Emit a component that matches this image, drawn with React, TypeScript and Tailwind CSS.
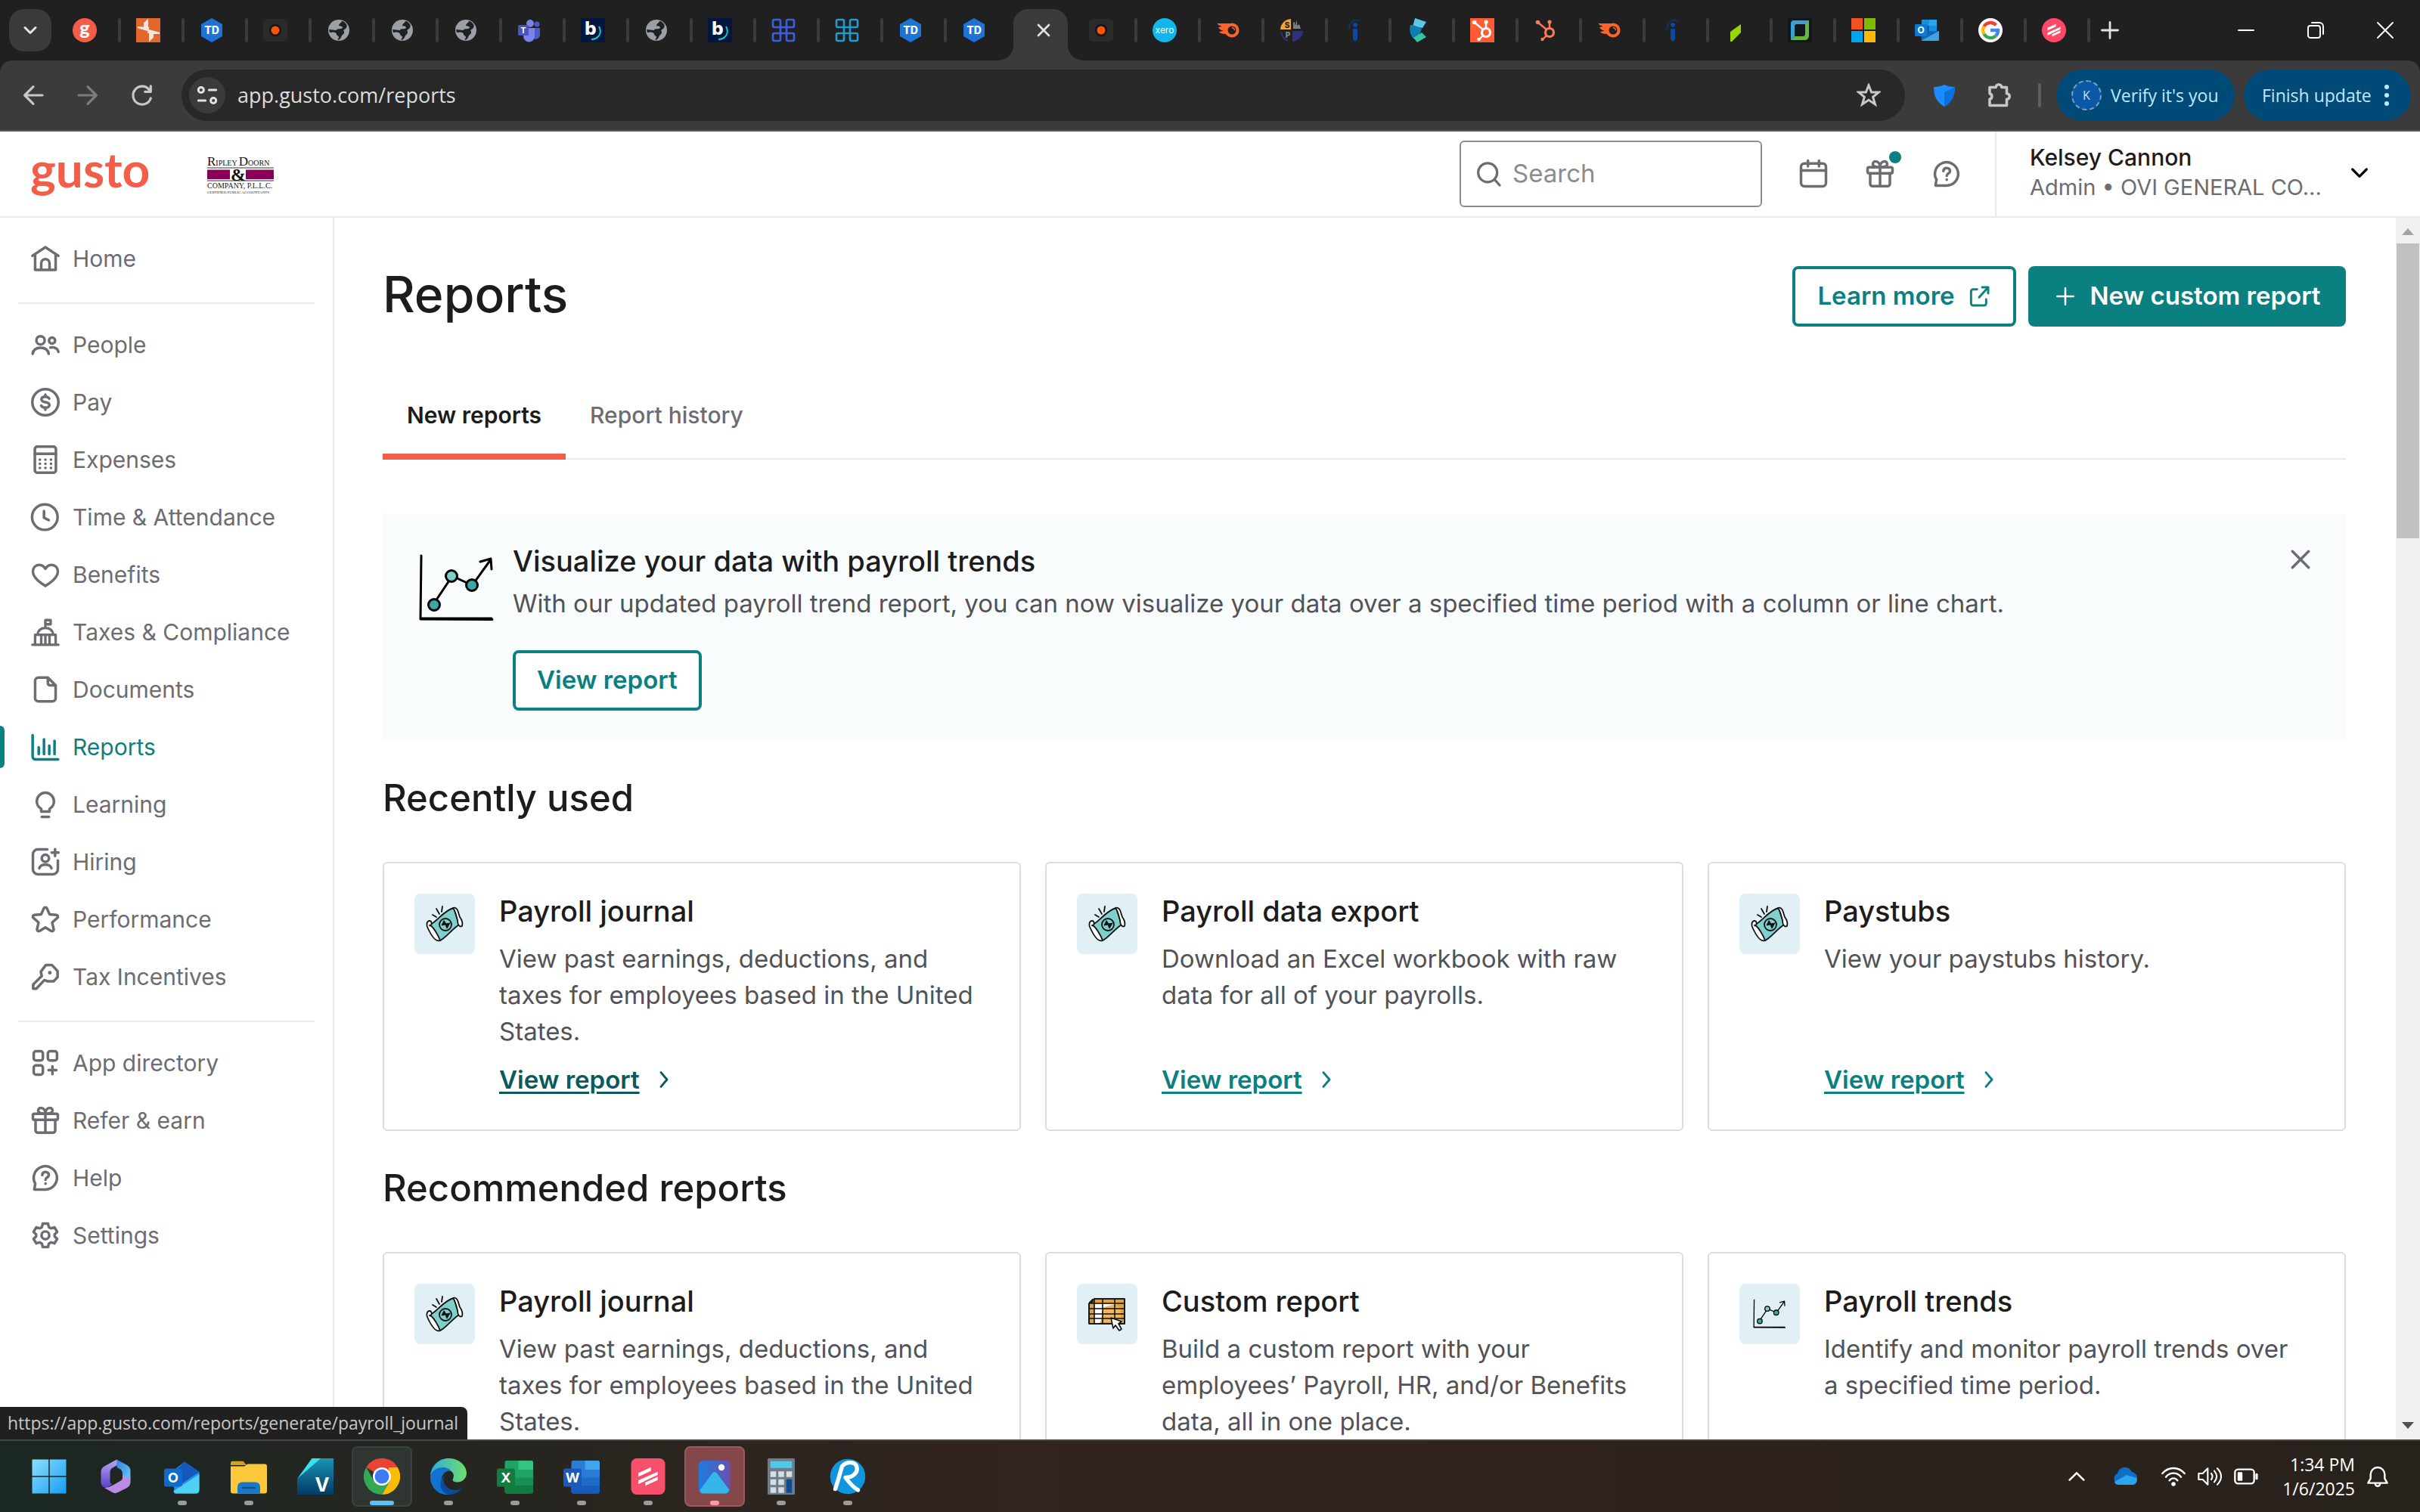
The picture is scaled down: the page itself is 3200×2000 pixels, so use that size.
import React from 'react';

type IconProps = { className?: string };

const Stroke: React.FC<{ className?: string; width?: number; children: React.ReactNode }> = ({ className = 'size-11', width = 1.9, children }) => (
    <svg viewBox="0 0 24 24" className={`shrink-0 ${className}`} fill="none" stroke="currentColor" strokeWidth={width} strokeLinecap="round" strokeLinejoin="round" aria-hidden="true">
        {children}
    </svg>
);

const Fav: React.FC<{ className?: string; children: React.ReactNode }> = ({ className = 'size-8', children }) => (
    <svg viewBox="0 0 32 32" className={`shrink-0 ${className}`} aria-hidden="true">
        {children}
    </svg>
);

/* ---------- sidebar icons ---------- */

const HomeIcon = () => (
    <Stroke>
        <path d="M2.6 10 12 3.8 21.4 10M4.6 9v11.2h14.8V9M9 20v-4.600a3 3 0 0 1 6 0V20" />
    </Stroke>
);
const PeopleIcon = () => (
    <Stroke>
        <circle cx="8.500" cy="8.800" r="3" />
        <circle cx="16.800" cy="9" r="2.200" />
        <path d="M2.800 18.600c.4-2.800 2.600-4.400 5.800-4.400s5.400 1.600 5.800 4.400M15.600 14c3.200-.4 5.400.8 5.800 3.200" />
    </Stroke>
);
const DollarIcon = () => (
    <Stroke>
        <circle cx="12" cy="12" r="9.400" />
        <path d="M14.800 9.400c-.5-1-1.500-1.400-2.800-1.400-1.700 0-2.800.8-2.800 2s1 1.700 2.800 2 2.900.8 2.900 2-1.200 2-2.900 2c-1.400 0-2.500-.5-3-1.500M12 6.600V8M12 16v1.400" />
    </Stroke>
);
const CalculatorIcon = () => (
    <Stroke>
        <rect x="4.400" y="2.600" width="15.200" height="18.800" rx="1.800" />
        <path d="M4.400 7.800h15.200M8 12h.1M12 12h.1M16 12h.1M8 15h.1M12 15h.1M16 15h.1M8 18h.1M12 18h.1M16 18h.1" />
    </Stroke>
);
const ClockIcon = () => (
    <Stroke>
        <circle cx="11.600" cy="12" r="9.200" />
        <path d="M11 7.600v4.800l3.400 1.800" />
    </Stroke>
);
const HeartIcon = () => (
    <Stroke>
        <path d="M12 20.200C6.500 16.800 3 13.600 3 9.800 3 7 5 5 7.500 5c1.900 0 3.500 1 4.500 2.800C13 6 14.600 5 16.500 5 19 5 21 7 21 9.800c0 3.800-3.500 7-9 10.400Z" />
    </Stroke>
);
const CapitolIcon = () => (
    <Stroke width={1.8}>
        <path d="M2.600 21.200h18.800M4.600 21v-7h14.800v7M9 14v7M12 14v7M15 14v7M6.400 14c.2-3.200 2.400-5 5.600-5s5.400 1.800 5.600 5M12 9V3.400h3.800v3H12" />
    </Stroke>
);
const DocumentIcon = () => (
    <Stroke>
        <path d="M13.800 3.400H7a2.400 2.400 0 0 0-2.400 2.400v12.400A2.400 2.400 0 0 0 7 20.600h10a2.400 2.400 0 0 0 2.400-2.400V9zM13.800 3.400V7.500A1.500 1.500 0 0 0 15.300 9h4.100" />
    </Stroke>
);
const BarChartIcon = () => (
    <Stroke>
        <path d="M2.800 3.600V19a2 2 0 0 0 2 2h16.400M7.200 12.200v5M11 6.600v10.600M14.800 11v6.200M18.600 7.600v9.600" />
    </Stroke>
);
const BulbIcon = () => (
    <Stroke>
        <path d="M9 17.200v-2c-1.800-1.100-3.200-3-3.200-5.400a6.200 6.200 0 0 1 12.400 0c0 2.400-1.400 4.300-3.200 5.400v2zM9.400 21h5.200" />
    </Stroke>
);
const HiringIcon = () => (
    <Stroke>
        <path d="M13.400 3H6.600A3.600 3.600 0 0 0 3 6.600v10.800A3.600 3.600 0 0 0 6.600 21h10.800a3.600 3.600 0 0 0 3.600-3.600V11M19 2.800v5M16.500 5.300h5M7.600 16.600c.6-1.700 2.200-2.500 4.400-2.500s3.800.8 4.400 2.500" />
        <circle cx="12" cy="9.400" r="2.600" />
    </Stroke>
);
const StarIcon: React.FC<IconProps> = ({ className }) => (
    <Stroke className={className}>
        <path d="M10.900 4.100c.4-.9 1.800-.9 2.200 0l1.900 4.300 4.900.5c1.100.1 1.500 1.400.7 2.100l-3.700 3.300 1.100 4.900c.2 1-.9 1.800-1.800 1.200L12 17.900l-4.200 2.500c-.9.600-2-.2-1.800-1.200l1.100-4.900L3.400 11c-.8-.7-.4-2 .7-2.100L9 8.400z" />
    </Stroke>
);
const KeyIcon = () => (
    <Stroke>
        <path d="M12.300 3.600h4.500l4 4.300v4.400l-2.900 3h-4.200l-2.400-.9-5.800 6.200H3.200v-3l6.200-6.200-.7-3z" />
        <path d="M15.200 9.100h.1" strokeWidth={2.6} />
    </Stroke>
);
const AppsIcon = () => (
    <Stroke>
        <rect x="3.600" y="3.600" width="6.600" height="6.600" rx="1.600" />
        <rect x="13.800" y="3.600" width="6.600" height="6.600" rx="1.600" />
        <rect x="3.600" y="13.800" width="6.600" height="6.600" rx="1.600" />
        <path d="M17.100 14.400v5.600M14.300 17.200h5.600" />
    </Stroke>
);
const GiftIcon: React.FC<IconProps> = ({ className }) => (
    <Stroke className={className}>
        <rect x="3" y="7.200" width="18" height="4.400" rx="1.200" />
        <path d="M4.900 11.600v7.600a1.700 1.700 0 0 0 1.700 1.700h10.800a1.700 1.700 0 0 0 1.700-1.700v-7.600M12 7.200v13.600M12 7.200c-3.600 0-5.200-.6-5.200-2.300C6.800 3.700 7.700 3 8.700 3 10.600 3 12 4.700 12 7.200ZM12 7.200c3.600 0 5.200-.6 5.200-2.300 0-1.200-.9-1.900-1.900-1.900C13.400 3 12 4.700 12 7.200Z" />
    </Stroke>
);
const HelpIcon: React.FC<IconProps> = ({ className }) => (
    <Stroke className={className}>
        <path d="M4 20.400h8a8.400 8.400 0 1 0-7.300-4.200z" />
        <path d="M9.700 10c.1-1.400 1-2.200 2.400-2.200s2.400.9 2.400 2.100c0 1.700-2.400 1.800-2.400 3.500M12.100 16.100v.1" />
    </Stroke>
);
const GearIcon = () => (
    <Stroke>
        <circle cx="12" cy="12" r="2.800" />
        <path d="M10.100 3.600h3.800l.6 2.500 1.600.9 2.500-.7 1.900 3.200-1.800 1.800v1.500l1.800 1.800-1.900 3.200-2.500-.7-1.600.9-.6 2.500h-3.800l-.6-2.500-1.600-.9-2.500.7-1.900-3.200 1.800-1.800v-1.500L3.500 9.500l1.900-3.200 2.500.7 1.600-.9z" />
    </Stroke>
);

/* ---------- favicons ---------- */

const GustoFav = () => (
    <Fav>
        <circle cx="16" cy="16" r="16" fill="#f45d48" />
        <text x="16" y="22" textAnchor="middle" fontFamily="Lato, sans-serif" fontWeight="900" fontSize="25" fill="#fff">g</text>
    </Fav>
);
const ArrowsFav = () => (
    <Fav>
        <rect width="32" height="32" fill="#e2672d" />
        <path d="M15 3v9h-4V7zM2 12l14 1-1 3zM18 29v-9h4v5zM31 20l-15-1 1-3z" fill="#f8e6dc" stroke="#f8e6dc" strokeWidth="2" />
    </Fav>
);
const TdFav = () => (
    <Fav>
        <path d="M16 0 30 8v16L16 32 2 24V8z" fill="#1b74d6" />
        <text x="16" y="21" textAnchor="middle" fontFamily="Inter, sans-serif" fontWeight="800" fontSize="14" fill="#fff">TD</text>
    </Fav>
);
const DotFav = () => (
    <Fav>
        <rect y="1" width="32" height="30" rx="5" fill="#2a2a2a" />
        <circle cx="16" cy="16" r="8" fill="#151515" />
        <circle cx="16" cy="16" r="5.500" fill="#ff5500" />
    </Fav>
);
const GlobeFav = () => (
    <Fav>
        <circle cx="16" cy="16" r="14" fill="#9aa0a6" />
        <path d="M20 4c-1 3-4 3-4 6 2 1 5 0 5 3-2 2-7 0-8 3-4 0-6-1-10-1l1 4c4-1 8-1 9 2 0 3 4 2 3 5-1 1-2 2-1 3 4-1 4-5 6-7 2-1 3-4 1-6 3-2 6-4 4-8-2-2-3-4-6-4Z" fill="#202020" />
    </Fav>
);
const TeamsFav = () => (
    <Fav>
        <circle cx="17" cy="7" r="5" fill="#7b83eb" />
        <circle cx="26" cy="8" r="3.500" fill="#5059c9" />
        <path d="M21 13h9v9a6 6 0 0 1-9 5z" fill="#5059c9" />
        <path d="M8 13h15v11a7.500 7.500 0 0 1-15 0z" fill="#7b83eb" />
        <rect x="1" y="9" width="14" height="14" rx="1.500" fill="#4b53bc" />
        <text x="8" y="20" textAnchor="middle" fontFamily="Inter, sans-serif" fontWeight="700" fontSize="11" fill="#fff">T</text>
    </Fav>
);
const BFav = () => (
    <Fav>
        <rect width="32" height="32" fill="#02173d" />
        <path d="M24 11c5 9-1 17-10 17" fill="none" stroke="#1cc4c9" strokeWidth="2" />
        <text x="13" y="22" textAnchor="middle" fontFamily="Inter, sans-serif" fontWeight="800" fontSize="24" fill="#fff">b</text>
    </Fav>
);
const KnotFav: React.FC<{ color: string }> = ({ color }) => (
    <Fav>
        <path d="M12 2H4a2 2 0 0 0-2 2v6a2 2 0 0 0 2 2h24a2 2 0 0 0 2-2V4a2 2 0 0 0-2-2h-6a2 2 0 0 0-2 2v24a2 2 0 0 0 2 2h6a2 2 0 0 0 2-2v-6a2 2 0 0 0-2-2H4a2 2 0 0 0-2 2v6a2 2 0 0 0 2 2h6a2 2 0 0 0 2-2V2" fill="none" stroke={color} strokeWidth="2.600" />
    </Fav>
);
const XeroFav = () => (
    <Fav>
        <circle cx="16" cy="16" r="16" fill="#13b5ea" />
        <text x="16" y="20" textAnchor="middle" fontFamily="Inter, sans-serif" fontSize="12" fill="#fff">xero</text>
    </Fav>
);
const SemrushFav = () => (
    <Fav>
        <path d="M1 7h20v17c-4 0-6-1-8-3-5 0-8-1-9-3l6-1c-4-1-6-3-7-5l5-1c-3-1-5-2-7-4Z" fill="#ff642d" />
        <circle cx="21" cy="16" r="9.500" fill="#ff642d" />
        <circle cx="21" cy="16" r="5.500" fill="#202020" />
        <path d="M21 12.500a3.500 3.500 0 0 1 3.500 3.500" fill="none" stroke="#ff642d" strokeWidth="1.300" />
    </Fav>
);
const SpeFav = () => (
    <Fav>
        <path d="M15 1v14H1A15 15 0 0 1 15 1Z" fill="#f2a33a" />
        <path d="M18 14V6l2-1v5l3-7v7l3-2 2 6z" fill="#7c7f85" />
        <path d="M17 17h14a15 15 0 0 1-14 14z" fill="#2f2f7d" />
        <path d="M2 18c1 6 4 10 9 12" fill="none" stroke="#2f2f7d" strokeWidth="2" />
        <text x="10" y="13" textAnchor="middle" fontFamily="Inter, sans-serif" fontWeight="800" fontSize="10" fill="#202020">S</text>
        <text x="11" y="26" textAnchor="middle" fontFamily="Inter, sans-serif" fontWeight="800" fontSize="10" fill="#85888e">P</text>
    </Fav>
);
const InfoFav = () => (
    <Fav>
        <circle cx="16" cy="9" r="3" fill="#0d47a1" />
        <path d="M13 14h6v14l-3 3-3-3z" fill="#0d47a1" />
        <path d="M8 15C8 5 16 0 23 4" fill="none" stroke="#12306b" strokeWidth="2" />
    </Fav>
);
const CFav = () => (
    <Fav>
        <path d="M11 0 26 5l-5 8-13-2z" fill="#5bc8e8" />
        <path d="M5 9c5 0 10 2 15 5l-3 8-8 5c-4-4-6-12-4-18Z" fill="#0f7db0" />
        <path d="m20 19 6 6-12 7-5-6z" fill="#35c4a0" />
    </Fav>
);
const HubFav: React.FC<{ bg?: string; fg: string }> = ({ bg, fg }) => (
    <Fav>
        {bg && <rect width="32" height="32" fill={bg} />}
        <g fill="none" stroke={fg}>
            <circle cx="21" cy="19" r="5.500" strokeWidth="3.200" />
            <path d="M21 13V6M17 15 6 6M17 23l-5 5" strokeWidth="2.400" />
        </g>
        <circle cx="21" cy="5" r="2.600" fill={fg} />
        <circle cx="5.500" cy="5.500" r="2.800" fill={fg} />
        <circle cx="11.500" cy="28" r="2.200" fill={fg} />
    </Fav>
);
const LeafFav = () => (
    <Fav>
        <path d="M8 18 22 8v11L10 31H8z" fill="#97d700" />
    </Fav>
);
const SquareFav = () => (
    <Fav>
        <rect width="32" height="32" fill="#11181c" />
        <path d="M8 3h20l-3 5H12c-2 0-3 1-3 3v13l-5 5V8c0-3 1-5 4-5Z" fill="#3aa0d8" />
        <path d="M28 3v20c0 3-2 6-5 6H4l5-5h11c2 0 3-1 3-3V8z" fill="#6cb33f" />
    </Fav>
);
const MicrosoftFav = () => (
    <Fav>
        <path d="M0 0h15v15H0z" fill="#f25022" />
        <path d="M17 0h15v15H17z" fill="#7fba00" />
        <path d="M0 17h15v15H0z" fill="#00a4ef" />
        <path d="M17 17h15v15H17z" fill="#ffb900" />
    </Fav>
);
const OutlookFav: React.FC<IconProps> = ({ className }) => (
    <Fav className={className}>
        <path d="M9 2h20v16H9z" fill="#1490df" />
        <path d="M19 2h10v8H19z" fill="#28a8ea" />
        <path d="M9 10h10v8H9z" fill="#0364b8" />
        <path d="M8 17h24v13H9z" fill="#1066b8" />
        <path d="m8 30 24-13v11a2 2 0 0 1-2 2z" fill="#50b9f0" opacity=".75" />
        <rect x="0" y="8" width="16" height="16" rx="1.500" fill="#0f78d4" />
        <text x="8" y="20" textAnchor="middle" fontFamily="Inter, sans-serif" fontWeight="700" fontSize="12" fill="#fff">O</text>
    </Fav>
);
const GoogleFav = () => (
    <Fav>
        <circle cx="16" cy="16" r="16" fill="#fff" />
        <g fill="none" strokeWidth="4.400">
            <path d="M23.500 9.300A10 10 0 0 0 7.500 11" stroke="#ea4335" />
            <path d="M7.500 11a10 10 0 0 0 0 10" stroke="#fbbc05" />
            <path d="M7.500 21A10 10 0 0 0 22.800 23.600" stroke="#34a853" />
            <path d="M22.800 23.600A10 10 0 0 0 26 16H16" stroke="#4285f4" />
        </g>
    </Fav>
);
const Stripes = () => (
    <path d="M7 12.500 19 7v4.500L7 17zM7 19l18-8v4.500l-18 8zM13 25l12-5.500v-4.500l-12 5.500z" fill="#fff" stroke="#fb4b69" strokeWidth="1" />
);
const StripeFav = () => (
    <Fav>
        <circle cx="16" cy="16" r="16" fill="#ff4766" />
        <Stripes />
    </Fav>
);

const leftTabs = [
    <GustoFav />, <ArrowsFav />, <TdFav />, <DotFav />, <GlobeFav />, <GlobeFav />, <GlobeFav />, <TeamsFav />,
    <BFav />, <GlobeFav />, <BFav />, <KnotFav color="#3b5fe0" />, <KnotFav color="#1f9bd1" />, <TdFav />, <TdFav />,
];
const rightTabs = [
    <DotFav />, <XeroFav />, <SemrushFav />, <SpeFav />, <InfoFav />, <CFav />, <HubFav bg="#ff5c35" fg="#fff" />,
    <HubFav fg="#ff7a59" />, <SemrushFav />, <InfoFav />, <LeafFav />, <SquareFav />, <MicrosoftFav />, <OutlookFav />,
    <GoogleFav />, <StripeFav />,
];

const BrowserTab: React.FC<{ icon: React.ReactNode; divider?: boolean }> = ({ icon, divider = true }) => (
    <button className="flex h-8 w-[84px] shrink-0 items-center justify-between pl-5" aria-label="Tab">
        {icon}
        {divider && <span className="h-8 w-1 rounded bg-[#3b3b3b]" />}
    </button>
);

const TabStrip = () => (
    <div className="flex h-20 items-center bg-[#202020] pl-3 text-[#e3e3e3]">
        <button className="mr-2 flex size-14 items-center justify-center rounded-[20px] bg-[#3b3b3b]" aria-label="Search tabs">
            <Stroke className="size-7" width={2.6}><path d="m6 9 6 6 6-6" /></Stroke>
        </button>
        {leftTabs.map((icon, i) => <BrowserTab key={i} icon={icon} divider={i < leftTabs.length - 1} />)}
        <div className="relative flex h-20 w-[84px] items-center pl-8">
            <svg viewBox="0 0 120 68" className="absolute bottom-0 -left-5 h-[68px] w-[120px]" aria-hidden="true">
                <path d="M0 68c16 0 24-8 24-22V20C24 8 32 0 44 0h32c12 0 20 8 20 20v26c0 14 8 22 24 22z" fill="#3b3b3b" />
            </svg>
            <button className="relative" aria-label="Close tab">
                <Stroke className="size-6" width={2.6}><path d="m5 5 14 14M19 5 5 19" /></Stroke>
            </button>
        </div>
        {rightTabs.map((icon, i) => <BrowserTab key={i} icon={icon} />)}
        <button className="ml-3" aria-label="New tab">
            <Stroke className="size-7" width={2.4}><path d="M12 3v18M3 12h18" /></Stroke>
        </button>
        <div className="ml-auto flex h-20 text-white">
            <button className="flex w-[92px] items-center justify-center" aria-label="Minimize">
                <Stroke className="size-6"><path d="M2 12h20" /></Stroke>
            </button>
            <button className="flex w-[92px] items-center justify-center" aria-label="Restore">
                <Stroke className="size-6"><rect x="2" y="6" width="16" height="16" rx="3" /><path d="M7 2h10a5 5 0 0 1 5 5v10" /></Stroke>
            </button>
            <button className="flex w-[92px] items-center justify-center" aria-label="Close">
                <Stroke className="size-6"><path d="m2 2 20 20M22 2 2 22" /></Stroke>
            </button>
        </div>
    </div>
);

const AddressBar = () => (
    <div className="bg-[#202020]">
        <div className="flex h-[94px] items-start rounded-t-2xl border-b-2 border-[#5a5658] bg-[#3b3b3b] pt-3 pr-3 pl-5 font-['Open_Sans',sans-serif]">
            <div className="flex h-[68px] items-center gap-6 text-[#c7c7c7]">
                <button className="flex size-12 items-center justify-center" aria-label="Back">
                    <Stroke className="size-8" width={2.4}><path d="M21 12H4M12 3.500 3.500 12l8.500 8.500" /></Stroke>
                </button>
                <button className="flex size-12 items-center justify-center text-[#7d7d7d]" aria-label="Forward">
                    <Stroke className="size-8" width={2.4}><path d="M3 12h17M12 3.500l8.500 8.500-8.500 8.500" /></Stroke>
                </button>
                <button className="flex size-12 items-center justify-center" aria-label="Reload">
                    <Stroke className="size-8" width={2.4}><path d="M20.500 15A9 9 0 1 1 19 6.500l1.500 2M20.500 2.800v5.700h-5.700" /></Stroke>
                </button>
            </div>
            <div className="ml-7 flex h-[68px] flex-1 items-center rounded-full bg-[#282828] pr-8 pl-[10px]">
                <button className="flex size-12 items-center justify-center rounded-full bg-[#3b3b3b] text-[#e3e3e3]" aria-label="View site information">
                    <Stroke className="size-7" width={2.6}>
                        <circle cx="5" cy="6" r="3" />
                        <path d="M14 6h8M2 18h8" />
                        <circle cx="19" cy="18" r="3" />
                    </Stroke>
                </button>
                <input
                    className="ml-4 min-w-0 flex-1 bg-transparent text-[27px] text-[#dcdcdc] outline-none"
                    defaultValue="app.gusto.com/reports"
                    aria-label="Address and search bar"
                />
                <button className="text-[#c7c7c7]" aria-label="Bookmark this tab">
                    <Stroke className="size-8" width={2.2}><path d="m12 2 2.700 7h7.300l-5.800 4.700 2.200 7.300-6.400-4.300L5.600 21l2.200-7.300L2 9h7.300z" strokeLinejoin="miter" /></Stroke>
                </button>
            </div>
            <div className="ml-7 flex h-[68px] items-center">
                <button className="flex size-12 items-center justify-center" aria-label="Shield extension">
                    <Fav>
                        <path d="M16 2c4 2 8 3 14 3 0 12-4 20-14 26C6 25 2 17 2 5c6 0 10-1 14-3Z" fill="#1a8cff" />
                        <path d="M30 5c0 12-4 20-14 26V12z" fill="#0b6fe0" />
                    </Fav>
                </button>
                <button className="ml-6 flex size-12 items-center justify-center text-[#c7c7c7]" aria-label="Extensions">
                    <Stroke className="size-9" width={2.4}>
                        <path d="M4 5h5.500a2.500 2.500 0 0 1 5 0H19v5.500a2.500 2.500 0 0 1 0 5V21H4v-5.500a2.600 2.600 0 0 0 0-5z" />
                    </Stroke>
                </button>
                <span className="ml-7 h-8 w-1 rounded bg-[#5f5f5f]" />
                <button className="ml-5 flex h-[68px] w-[236px] items-center gap-3 rounded-full bg-[#004a77] pl-5 text-[23px] whitespace-nowrap text-[#c2e7ff]">
                    <span className="flex size-10 shrink-0 items-center justify-center rounded-full border-2 border-dashed border-[#7f9fb6] bg-[#0b57a8] text-base">K</span>
                    Verify it's you
                </button>
                <button className="ml-3 flex h-[68px] w-[221px] items-center justify-between rounded-full bg-[#004a77] pr-7 pl-6 text-[23px] whitespace-nowrap text-[#c2e7ff]">
                    Finish update
                    <svg viewBox="0 0 8 32" className="h-8 w-2" fill="currentColor" aria-hidden="true">
                        <circle cx="4" cy="5" r="3" /><circle cx="4" cy="16" r="3" /><circle cx="4" cy="27" r="3" />
                    </svg>
                </button>
            </div>
        </div>
    </div>
);

const FirmLogo = () => (
    <svg viewBox="0 0 88 54" className="h-[54px] w-[88px] overflow-visible" role="img" aria-label="Ripley Doorn & Company, P.L.L.C." fontFamily="'Liberation Serif', serif">
        <text x="0" y="16" fontSize="17" fill="#111">R<tspan fontSize="10">IPLEY </tspan>D<tspan fontSize="10">OORN</tspan></text>
        <path d="M0 19h88M0 36h88" stroke="#333" strokeWidth="1" />
        <path d="M0 21.500h30V34H0zM51 21.500h37V34H51z" fill="#8a0059" />
        <text x="41" y="36" textAnchor="middle" fontSize="24" fontWeight="700" fill="#111">&amp;</text>
        <text x="0" y="46" fontSize="10" fill="#222">COMPANY, P.L.L.C.</text>
        <text x="0" y="53" fontSize="5" fill="#222">CERTIFIED PUBLIC ACCOUNTANTS</text>
    </svg>
);

const AppHeader = () => (
    <header className="flex h-[114px] items-center border-b-2 border-[#e9e9e9] bg-white pl-10">
        <a href="#home" className="mb-3 font-['Lato',sans-serif] text-[64px] leading-[80px] font-bold text-[#f45d48]">gusto</a>
        <div className="ml-[76px]"><FirmLogo /></div>
        <label className="ml-auto flex h-[88px] w-[400px] items-center gap-3 rounded-md border-2 border-[#8c8c8c] bg-white pl-4 text-[#6c6c72]">
            <Stroke className="size-10" width={2}><circle cx="11.500" cy="11" r="7.500" /><path d="m17 16.500 4 4.500" /></Stroke>
            <input type="search" placeholder="Search" aria-label="Search" className="min-w-0 flex-1 text-[33px] outline-none placeholder:text-[#8c8c8c]" />
        </label>
        <div className="ml-[46px] flex items-center gap-11 text-[#6c6c72]">
            <button aria-label="Calendar">
                <Stroke><rect x="3" y="4.500" width="18" height="16.500" rx="2.400" /><path d="M3 9.500h18M8 2.500v4M16 2.500v4" /></Stroke>
            </button>
            <button className="relative" aria-label="Rewards">
                <GiftIcon />
                <span className="absolute -top-2 right-[-6px] size-4 rounded-full bg-[#0a8080]" />
            </button>
            <button aria-label="Help"><HelpIcon /></button>
        </div>
        <button className="ml-[42px] flex h-28 w-[562px] items-center border-l-2 border-[#e9e9e9] pb-1 pl-11 text-left">
            <span className="w-[400px] text-[30px] leading-10 whitespace-nowrap">
                <span className="block font-medium text-[#1c1c1c]">Kelsey Cannon</span>
                <span className="block text-[29px] text-[#6c6c72]">Admin • OVI GENERAL CO...</span>
            </span>
            <Stroke className="ml-5 size-8" width={2.4}><path d="m5 9 7 7 7-7" /></Stroke>
        </button>
    </header>
);

const navGroups = [
    [{ label: 'Home', icon: <HomeIcon /> }],
    [
        { label: 'People', icon: <PeopleIcon /> },
        { label: 'Pay', icon: <DollarIcon /> },
        { label: 'Expenses', icon: <CalculatorIcon /> },
        { label: 'Time & Attendance', icon: <ClockIcon /> },
        { label: 'Benefits', icon: <HeartIcon /> },
        { label: 'Taxes & Compliance', icon: <CapitolIcon /> },
        { label: 'Documents', icon: <DocumentIcon /> },
        { label: 'Reports', icon: <BarChartIcon />, active: true },
        { label: 'Learning', icon: <BulbIcon /> },
        { label: 'Hiring', icon: <HiringIcon /> },
        { label: 'Performance', icon: <StarIcon /> },
        { label: 'Tax Incentives', icon: <KeyIcon /> },
    ],
    [
        { label: 'App directory', icon: <AppsIcon /> },
        { label: 'Refer & earn', icon: <GiftIcon /> },
        { label: 'Help', icon: <HelpIcon /> },
        { label: 'Settings', icon: <GearIcon /> },
    ],
];

const Sidebar = () => (
    <nav className="w-[442px] shrink-0 border-r-2 border-[#e9e9e9] pt-4">
        {navGroups.map((group, i) => (
            <React.Fragment key={i}>
                {i > 0 && <hr className="mx-6 mt-5 mb-4 border-t-2 border-[#e9e9e9]" />}
                <ul>
                    {group.map((item: { label: string; icon: React.ReactNode; active?: boolean }) => (
                        <li key={item.label}>
                            <a
                                href="#nav"
                                className={`relative flex h-[76px] items-center gap-[14px] pl-[38px] text-[30px] ${item.active ? 'text-[#0a8080]' : 'text-[#6c6c72]'}`}
                            >
                                {item.active && <span className="absolute left-0 h-14 w-[6px] rounded-r-md bg-[#0a8080]" />}
                                {item.icon}
                                {item.label}
                            </a>
                        </li>
                    ))}
                </ul>
            </React.Fragment>
        ))}
    </nav>
);

/* ---------- illustrations ---------- */

const TrendArt: React.FC<IconProps> = ({ className }) => (
    <svg viewBox="0 0 100 92" className={`shrink-0 ${className}`} fill="none" stroke="#000" strokeWidth="3" strokeLinecap="round" strokeLinejoin="round" aria-hidden="true">
        <path d="M3 3 2 87l95 .5M4 86h92" />
        <path d="m20 66 24-36M44 30l26 12M72 40 95 8M81 11l14-4 1 14" />
        <circle cx="20" cy="68" r="7.500" fill="#3aa9a4" />
        <circle cx="43" cy="30" r="7.500" fill="#7fcfcb" />
        <circle cx="70" cy="42" r="7.500" fill="#3aa9a4" />
    </svg>
);
const MoneyArt = () => (
    <svg viewBox="0 0 80 80" className="size-20" stroke="#111" strokeWidth="1.800" strokeLinecap="round" strokeLinejoin="round" aria-hidden="true">
        <path d="M18 42c8 0 20-20 34-23l7 22C50 47 40 60 34 62c-6-3-10-12-16-20Z" fill="#7fcfcb" />
        <path d="M20 42c4 0 12 14 14 20-7 3-13-9-17-18-2-6 2-10 5-7 2 3 0 5-2 5Z" fill="#fff" />
        <path d="M51 19c6-2 7 6 9 12 3 4 4 9 3 12-4 2-6-3-6-8-2-5-2-11-6-16Z" fill="#fff" />
        <circle cx="41" cy="41" r="8" fill="none" />
        <path d="m39 36-3 6 5-1 2 5 4-7-5 1z" fill="#111" strokeWidth="1" />
        <path d="M24 28l5 3M29 20l4 7M37 17l-1 7" fill="none" />
    </svg>
);
const TableArt = () => (
    <svg viewBox="0 0 80 80" className="size-20" stroke="#111" strokeWidth="1.600" strokeLinejoin="round" aria-hidden="true">
        <path d="M23 20h40v33H16V26z" fill="#e0a03a" />
        <path d="M23 27h31c-10 1-16 3-20 9-2 5 0 12-4 16h-7z" fill="#fff" stroke="none" />
        <path d="M34 32c8-5 18-3 24 0v19H34z" fill="#efb75c" stroke="none" />
        <path d="M16 26h47M16 33h47M16 40h47M16 46h47M16 53h47V20H23v33M34 20v33M50 20v33M16 26v27" fill="none" />
        <path d="m16 25 5-5v5z" fill="#1c2340" strokeWidth="1" />
        <path d="m45 45 14 5-4 3 4 7-3 2-5-7-3 4z" fill="#fff" />
    </svg>
);

const ReportCard: React.FC<{ icon: React.ReactNode; title: string; description: string; visited?: boolean }> = ({ icon, title, description, visited }) => (
    <article className="flex gap-8 rounded-md border-2 border-[#dcdcdc] py-10 pr-[52px] pl-10">
        <div className="flex size-20 shrink-0 items-center justify-center rounded-lg bg-[#e0f0f5]">{icon}</div>
        <div className="flex flex-1 flex-col">
            <h3 className="text-[38px] leading-[46px] font-medium text-[#1c1c1c]">{title}</h3>
            <p className="mt-4 mb-4 min-h-36 text-[33px] leading-[48px] text-[#525257]">{description}</p>
            <a href="#report" className={`mb-[2px] flex items-center gap-4 text-[33px] leading-[48px] font-semibold ${visited ? 'text-[#0a5a5c]' : 'text-[#0a8080]'}`}>
                <span className="underline decoration-3 underline-offset-4">View report</span>
                <Stroke className="size-8" width={2.2}><path d="m9 5 6 7-6 7" /></Stroke>
            </a>
        </div>
    </article>
);

const Section: React.FC<{ title: string; children: React.ReactNode }> = ({ title, children }) => (
    <section>
        <h2 className="pt-[46px] pb-[54px] text-[49px] leading-[60px] font-medium text-[#1c1c1c]">{title}</h2>
        <div className="grid grid-cols-3 gap-8">{children}</div>
    </section>
);

const JOURNAL = 'View past earnings, deductions, and taxes for employees based in the United States.';

const ReportsPage = () => (
    <main className="flex-1 overflow-hidden pt-16 pr-[66px] pl-16">
        <div className="flex h-20 items-start justify-between">
            <h1 className="text-[66px] leading-[74px] font-medium text-[#1c1c1c]">Reports</h1>
            <div className="flex gap-4 text-[33px] font-semibold">
                <a href="#learn" className="flex h-20 w-[296px] items-center justify-center gap-4 rounded-lg border-4 border-[#0a8080] text-[#0a8080]">
                    Learn more
                    <Stroke className="size-8" width={2.2}><path d="M10 5H6a2 2 0 0 0-2 2v12a2 2 0 0 0 2 2h11a2 2 0 0 0 2-2v-4M15 3h6v6M21 3l-9 10" /></Stroke>
                </a>
                <button className="flex h-20 w-[420px] items-center justify-center gap-4 rounded-lg bg-[#0a8080] text-white">
                    <Stroke className="size-8"><path d="M12 4v16M4 12h16" /></Stroke>
                    New custom report
                </button>
            </div>
        </div>

        <div className="mt-[62px] flex h-[114px] border-b-2 border-[#e9e9e9] text-[30px]" role="tablist">
            <button role="tab" aria-selected="true" className="-mb-[2px] border-b-8 border-[#f45d48] px-8 pt-1 font-semibold text-[#1c1c1c]">New reports</button>
            <button role="tab" aria-selected="false" className="-mb-[2px] border-b-8 border-transparent px-8 pt-1 font-medium text-[#6c6c72]">Report history</button>
        </div>

        <section className="mt-[72px] flex h-[300px] items-start bg-[#f8fcfd] pt-9 pr-11 pl-12">
            <TrendArt className="mt-4 mr-6 h-[92px] w-[100px]" />
            <div className="flex-1">
                <h2 className="text-[38px] leading-[52px] font-medium text-[#1c1c1c]">Visualize your data with payroll trends</h2>
                <p className="mt-1 text-[33px] leading-[52px] whitespace-nowrap text-[#525257]">
                    With our updated payroll trend report, you can now visualize your data over a specified time period with a column or line chart.
                </p>
                <button className="mt-9 h-20 rounded-lg border-4 border-[#0a8080] bg-white px-7 text-[33px] font-semibold text-[#0a8080]">View report</button>
            </div>
            <button className="mt-2 text-[#6c6c72]" aria-label="Dismiss">
                <Stroke className="size-8" width={2.6}><path d="m4 4 16 16M20 4 4 20" /></Stroke>
            </button>
        </section>

        <Section title="Recently used">
            <ReportCard icon={<MoneyArt />} title="Payroll journal" description={JOURNAL} visited />
            <ReportCard icon={<MoneyArt />} title="Payroll data export" description="Download an Excel workbook with raw data for all of your payrolls." />
            <ReportCard icon={<MoneyArt />} title="Paystubs" description="View your paystubs history." />
        </Section>
        <Section title="Recommended reports">
            <ReportCard icon={<MoneyArt />} title="Payroll journal" description={JOURNAL} />
            <ReportCard icon={<TableArt />} title="Custom report" description="Build a custom report with your employees’ Payroll, HR, and/or Benefits data, all in one place." />
            <ReportCard icon={<TrendArt className="h-10 w-11" />} title="Payroll trends" description="Identify and monitor payroll trends over a specified time period." />
        </Section>
    </main>
);

const ScrollRail = () => (
    <div className="flex w-8 shrink-0 flex-col items-center bg-[#f1f1f1] py-3" aria-hidden="true">
        <svg viewBox="0 0 16 12" className="h-3 w-4"><path d="M0 11 8 2l8 9z" fill="#a3a3a3" /></svg>
        <div className="mt-[10px] h-[390px] w-[30px] bg-[#c1c1c1]" />
        <svg viewBox="0 0 16 12" className="mt-auto h-3 w-4"><path d="m0 1 8 9 8-9z" fill="#505050" /></svg>
    </div>
);

/* ---------- taskbar ---------- */

const StartIcon = () => (
    <Fav className="size-12">
        <defs><linearGradient id="win" x1="0" y1="0" x2="1" y2="1"><stop stopColor="#8be0ff" /><stop offset="1" stopColor="#1a9bf0" /></linearGradient></defs>
        <path d="M1 1h14.500v14.500H1zM16.500 1H31v14.500H16.500zM1 16.500h14.500V31H1zM16.500 16.500H31V31H16.500z" fill="url(#win)" />
    </Fav>
);
const CopilotIcon = () => (
    <Fav className="size-12">
        <defs>
            <linearGradient id="cpA" x1="0" y1="0" x2="0" y2="1"><stop stopColor="#b9a6f0" /><stop offset="1" stopColor="#5b3fc4" /></linearGradient>
            <linearGradient id="cpB" x1="0" y1="0" x2="1" y2="1"><stop stopColor="#2f7fe0" /><stop offset="1" stopColor="#6fd0f5" /></linearGradient>
        </defs>
        <path d="M17 1 6 7c-2 1-3 3-3 5v9c0 3 2 5 5 5l5-3c-2-1-2-2-2-4v-6c0-3 1-4 3-5l5-3z" fill="url(#cpA)" />
        <path d="m17 1 9 5c2 1 3 3 3 5v8l-7 3v-8c0-3-1-4-3-5l-2-1z" fill="url(#cpB)" />
        <path d="M29 18v3c0 2-1 4-3 5l-8 4c-2 1-3 1-5 0l-7-4c3 0 5-1 7-2l7-4c2-1 2-2 2-5z" fill="#b98ce6" />
    </Fav>
);
const NewOutlookIcon = () => (
    <Fav className="size-12">
        <path d="M8 11 18 3l13 9v16a3 3 0 0 1-3 3H9z" fill="#2a8ee8" />
        <path d="m18 3 13 9-15 10-6-11z" fill="#1558b8" />
        <path d="m8 29 23-15v14a3 3 0 0 1-3 3H10z" fill="#4fd1f5" />
        <rect x="0" y="9" width="16" height="16" rx="2" fill="#0f6bcb" />
        <text x="8" y="21" textAnchor="middle" fontFamily="Inter, sans-serif" fontWeight="700" fontSize="12" fill="#fff">O</text>
    </Fav>
);
const FolderIcon = () => (
    <Fav className="size-12">
        <path d="M0 4a1.500 1.500 0 0 1 1.500-1.500H11l3 3.500H0z" fill="#d9a010" />
        <path d="M0 7h12l3-2h15a2 2 0 0 1 2 2v22a2 2 0 0 1-2 2H2a2 2 0 0 1-2-2z" fill="#fdc93a" />
        <path d="M6 31v-6a4 4 0 0 1 4-4h12a4 4 0 0 1 4 4v6z" fill="#1978c8" />
        <path d="M10 26h12" stroke="#0f4f8f" strokeWidth="1.500" />
    </Fav>
);
const VIcon = () => (
    <Fav className="size-12">
        <defs><linearGradient id="vee" x1="0" y1="1" x2="0" y2="0"><stop stopColor="#033a63" /><stop offset="1" stopColor="#1a93b8" /></linearGradient></defs>
        <path d="M0 18 21 0h11v32H0z" fill="url(#vee)" />
        <path d="M0 18 13 0h8z" fill="#36e0f2" />
        <text x="22" y="29" textAnchor="middle" fontFamily="Inter, sans-serif" fontWeight="700" fontSize="17" fill="#fff">V</text>
    </Fav>
);
const ChromeIcon = () => (
    <Fav className="size-12">
        <path d="M16 16 2.140 8A16 16 0 0 1 29.860 8z" fill="#ea4335" />
        <path d="M16 0a16 16 0 0 1 13.860 8H16z" fill="#ea4335" />
        <path d="M29.860 8A16 16 0 0 1 16 32l7-12-1-12z" fill="#fbbc04" />
        <path d="M2.140 8A16 16 0 0 0 16 32l7-12-14 0z" fill="#34a853" />
        <circle cx="16" cy="16" r="8" fill="#fff" />
        <circle cx="16" cy="16" r="6.300" fill="#3b7ded" />
    </Fav>
);
const EdgeIcon = () => (
    <Fav className="size-12">
        <defs><linearGradient id="edge" x1="0" y1="0" x2="1" y2="0"><stop stopColor="#2fa8e0" /><stop offset="1" stopColor="#6fe06a" /></linearGradient></defs>
        <path d="M0 15C1 6 8 0 16 0c10 0 16 7 16 13 0 5-4 8-8 8-3 0-5-1-4-3 2-4-1-8-6-8C8 10 2 12 0 15Z" fill="url(#edge)" />
        <path d="M0 16c1-5 6-8 11-8 3 0 6 1 7 3-6 0-9 5-8 10 1 6 6 9 11 9-2 1-4 2-6 2C6 32 0 25 0 16Z" fill="#1273cf" />
        <path d="M13 15c-4 5 1 13 9 13 3 0 5-1 7-3-3 5-8 7-13 7-7-1-10-12-3-17Z" fill="#0c4a9e" />
    </Fav>
);
const OfficeIcon: React.FC<{ letter: string; light: string; mid: string; dark: string }> = ({ letter, light, mid, dark }) => (
    <Fav className="size-12">
        <rect x="7" y="2" width="25" height="29" rx="2" fill={mid} />
        <path d="M19 2h11a2 2 0 0 1 2 2v6H19z" fill={light} />
        <path d="M7 17h25v7H7z" fill={dark} opacity=".5" />
        <path d="M7 24h25v5a2 2 0 0 1-2 2H9a2 2 0 0 1-2-2z" fill={dark} />
        <rect y="9" width="16" height="16" rx="1.500" fill={dark} />
        <text x="8" y="21" textAnchor="middle" fontFamily="Inter, sans-serif" fontWeight="700" fontSize="12" fill="#fff">{letter}</text>
    </Fav>
);
const StripeAppIcon = () => (
    <Fav className="size-12">
        <rect x="1" width="30" height="32" rx="5" fill="#f7506b" />
        <Stripes />
    </Fav>
);
const PhotosIcon = () => (
    <Fav className="size-12">
        <defs><linearGradient id="photo" x1="0" y1="0" x2="1" y2="0"><stop stopColor="#1c7be0" /><stop offset="1" stopColor="#6a50b0" /></linearGradient></defs>
        <rect x="2" y="2" width="28" height="29" rx="4" fill="url(#photo)" />
        <path d="m3 28 11-15a2.500 2.500 0 0 1 4 0l11 15c-1 2-2 3-4 3H6c-2 0-3-1-3-3Z" fill="#35b5e8" />
        <circle cx="22" cy="8" r="2.800" fill="#fff" />
    </Fav>
);
const CalcAppIcon = () => (
    <Fav className="size-12">
        <rect x="4" width="24" height="32" rx="1" fill="#6d7c88" />
        <rect x="6.500" y="2.500" width="19" height="6" fill="#4ccbe8" />
        <path d="M6.500 11.500h5v5h-5zM13.500 11.500h5v5h-5zM20.500 11.500h5v5h-5zM6.500 18.500h5v5h-5zM13.500 18.500h5v5h-5zM6.500 25.500h5v5h-5zM13.500 25.500h5v5h-5z" fill="#d8dde2" />
        <path d="M20.500 18.500h5v12h-5z" fill="#124a8f" />
    </Fav>
);
const RIcon = () => (
    <Fav className="size-12">
        <circle cx="16" cy="16" r="15.500" fill="#0f96dc" />
        <path d="M5 27C7 21 9 14 11 7c3-4 12-5 13 1 1 5-4 9-10 9 3 4 6 8 11 11" fill="none" stroke="#fff" strokeWidth="3.600" strokeLinecap="round" strokeLinejoin="round" />
    </Fav>
);

const taskbarApps: { name: string; icon: React.ReactNode; state?: 'open' | 'focus' | 'alert' }[] = [
    { name: 'Start', icon: <StartIcon /> },
    { name: 'Copilot', icon: <CopilotIcon /> },
    { name: 'Outlook', icon: <NewOutlookIcon />, state: 'open' },
    { name: 'File Explorer', icon: <FolderIcon />, state: 'open' },
    { name: 'V', icon: <VIcon /> },
    { name: 'Chrome', icon: <ChromeIcon />, state: 'focus' },
    { name: 'Edge', icon: <EdgeIcon />, state: 'open' },
    { name: 'Excel', icon: <OfficeIcon letter="X" light="#33c481" mid="#21a366" dark="#107c41" />, state: 'open' },
    { name: 'Word', icon: <OfficeIcon letter="W" light="#41a5ee" mid="#2b7cd3" dark="#185abd" />, state: 'open' },
    { name: 'Ramp', icon: <StripeAppIcon />, state: 'open' },
    { name: 'Photos', icon: <PhotosIcon />, state: 'alert' },
    { name: 'Calculator', icon: <CalcAppIcon />, state: 'open' },
    { name: 'Revu', icon: <RIcon />, state: 'open' },
];

const tileClass = { open: '', focus: 'bg-[#2f3632] border-[#3c433f]', alert: 'bg-[#84474a] border-[#9a5a5e]' };
const dotClass = { open: 'w-3 bg-[#9b9b9b]', focus: 'w-8 bg-[#60c0f5]', alert: 'w-3 bg-[#ff99a4]' };

const Taskbar = () => (
    <footer className="flex h-24 shrink-0 items-center border-t-2 border-[#454545] bg-linear-to-r from-[#1a2722] via-[#33231e] via-45% to-[#28221c] pr-10 pl-[21px] text-white">
        {taskbarApps.map((app) => (
            <button key={app.name} aria-label={app.name} className="flex w-[88px] justify-center">
                <span className={`relative flex h-20 w-20 items-center justify-center rounded-lg border-2 ${app.state && app.state !== 'open' ? tileClass[app.state] : 'border-transparent'}`}>
                    {app.icon}
                    {app.state && <span className={`absolute bottom-0 h-[6px] rounded-full ${dotClass[app.state]}`} />}
                </span>
            </button>
        ))}
        <div className="ml-auto flex items-center">
            <button aria-label="Show hidden icons"><Stroke className="size-7" width={2.2}><path d="m4 16 8-8 8 8" /></Stroke></button>
            <Fav className="ml-[34px] size-8">
                <path d="M8 27a8 8 0 0 1-2-15 10 10 0 0 1 19-2 8 8 0 0 1 7 9c0 5-3 8-7 8z" fill="#0f6fc6" />
                <path d="m2 23 16-9 13 4c2 4-1 9-6 9H8c-3 0-5-1-6-4Z" fill="#2aa5ee" />
            </Fav>
            <Stroke className="ml-8 size-8" width={1.8}>
                <path d="M1 9c6-7 16-7 22 0M4.500 12.500c4-5 11-5 15 0M8 16c2-3 6-3 8 0" />
                <circle cx="12" cy="19.500" r="1.200" fill="currentColor" />
            </Stroke>
            <Stroke className="ml-4 size-8" width={1.6}>
                <path d="M1 9v6h4l5 5V4L5 9zM13.500 9c1.500 2 1.500 4 0 6M16.500 6.500c3 3.500 3 7.500 0 11M19.500 4c5 5 5 11 0 16" />
            </Stroke>
            <Stroke className="ml-4 size-8" width={1.8}>
                <rect x="1" y="5" width="19" height="14" rx="3" />
                <path d="M22.500 10v4" strokeWidth={2.4} />
                <path d="M4.500 8.500h3v7h-3z" fill="currentColor" />
            </Stroke>
            <div className="ml-8 text-right font-['Open_Sans',sans-serif] text-[23px] leading-8">
                <div>1:34 PM</div>
                <div>1/6/2025</div>
            </div>
            <button className="ml-[14px]" aria-label="Notifications">
                <Stroke className="size-8" width={1.8}><path d="M2.500 18.500 5 14V10a7 7 0 0 1 14 0v4l2.500 4.500zM9.500 19c.3 1.800 1.200 2.600 2.500 2.600s2.200-.8 2.500-2.600" /></Stroke>
            </button>
        </div>
    </footer>
);

const App: React.FC = () => {
    return (
        <div className="flex h-screen flex-col overflow-hidden bg-white font-['Inter',sans-serif]">
            <TabStrip />
            <AddressBar />
            <AppHeader />
            <div className="relative flex min-h-0 flex-1 overflow-hidden">
                <Sidebar />
                <ReportsPage />
                <ScrollRail />
                <div className="absolute bottom-0 left-0 flex h-[43px] items-center rounded-tr-lg bg-[#202020] pr-3 pl-[10px] font-['Open_Sans',sans-serif] text-[23px] text-[#c7c7c7]">
                    https://app.gusto.com/reports/generate/payroll_journal
                </div>
            </div>
            <Taskbar />
        </div>
    );
};

export default App;
